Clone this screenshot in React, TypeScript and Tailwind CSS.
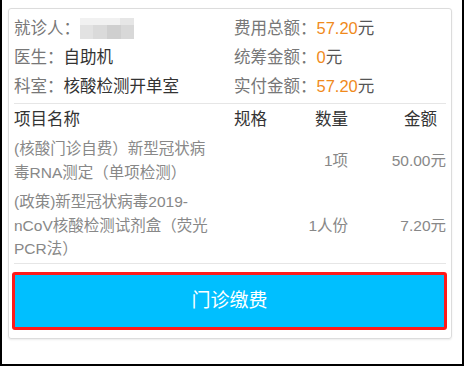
import React from 'react'

const items = [
  { name: '(核酸门诊自费）新型冠状病毒RNA测定（单项检测）', spec: '', qty: '1项', amount: '50.00元' },
  { name: '(政策)新型冠状病毒2019-nCoV核酸检测试剂盒（荧光PCR法）', spec: '', qty: '1人份', amount: '7.20元' },
]

function Blurred() {
  // mosaic standing in for the hidden patient name
  return (
    <div className="flex flex-col w-[54px] h-[21px]">
      <div className="flex h-[7px]">
        <div className="w-[40px] bg-[#f1f1f1]" />
        <div className="w-[14px] bg-[#e6e6e6]" />
      </div>
      <div className="flex h-[14px]">
        <div className="w-[13px] bg-[#e2e2e2]" />
        <div className="w-[14px] bg-[#dadada]" />
        <div className="w-[14px] bg-[#cfcfcf]" />
        <div className="w-[13px] bg-[#d8d8d8]" />
      </div>
    </div>
  )
}

export default function App() {
  return (
    <div
      className="w-[464px] h-[366px] bg-white border-l-[2px] border-r-[2px] border-b-[2px] border-black pt-[8px] pl-[6px]"
      style={{ fontFamily: '"Liberation Sans", "Noto Sans CJK SC", sans-serif' }}
    >
      <div className="w-[444px] h-[331px] border border-[#dcdcdc] rounded-[3px] shadow-[0_1px_2px_rgba(0,0,0,0.08)] flex flex-col">
        <div className="px-[5px] pt-[5px]">
          {/* patient / fee summary */}
          <div className="grid grid-cols-[220px_1fr] text-[16.5px] border-b border-[#e6e6e6] pb-[2px]">
            <div className="h-[29px] flex items-center text-[#777]">
              就诊人：<Blurred />
            </div>
            <div className="h-[29px] flex items-center text-[#777]">
              费用总额：<span className="text-[#f08a1c]">57.20</span><span className="text-[#555]">元</span>
            </div>
            <div className="h-[29px] flex items-center text-[#777]">
              医生：<span className="text-[#333]">自助机</span>
            </div>
            <div className="h-[29px] flex items-center text-[#777]">
              统筹金额：<span className="text-[#f08a1c]">0</span><span className="text-[#555]">元</span>
            </div>
            <div className="h-[29px] flex items-center text-[#777]">
              科室：<span className="text-[#333]">核酸检测开单室</span>
            </div>
            <div className="h-[29px] flex items-center text-[#777]">
              实付金额：<span className="text-[#f08a1c]">57.20</span><span className="text-[#555]">元</span>
            </div>
          </div>

          {/* item table */}
          <div className="grid grid-cols-[220px_66px_48px_1fr] h-[30px] items-center text-[16.5px] text-[#333]">
            <div>项目名称</div>
            <div>规格</div>
            <div className="text-right">数量</div>
            <div className="text-right pr-[9px]">金额</div>
          </div>
          <div className="border-b border-[#e6e6e6] pt-[3px] pb-[2px]">
            {items.map((it, i) => (
              <div
                key={i}
                className={`grid grid-cols-[220px_66px_48px_1fr] items-center text-[15.5px] leading-[23.5px] text-[#888] ${i > 0 ? 'mt-[6px]' : ''}`}
              >
                <div className="pr-[17px]">{it.name}</div>
                <div>{it.spec}</div>
                <div className="text-right whitespace-nowrap">{it.qty}</div>
                <div className="text-right">{it.amount}</div>
              </div>
            ))}
          </div>
        </div>

        <div className="pl-[3px] pr-[4px] pt-[8px]">
          <div className="border-[3px] border-[#ff1a1a] rounded-[3px]">
            <button className="w-full h-[52px] bg-[#00bfff] text-white text-[19px] flex items-center justify-center pt-[2px]">
              门诊缴费
            </button>
          </div>
        </div>
      </div>
    </div>
  )
}
